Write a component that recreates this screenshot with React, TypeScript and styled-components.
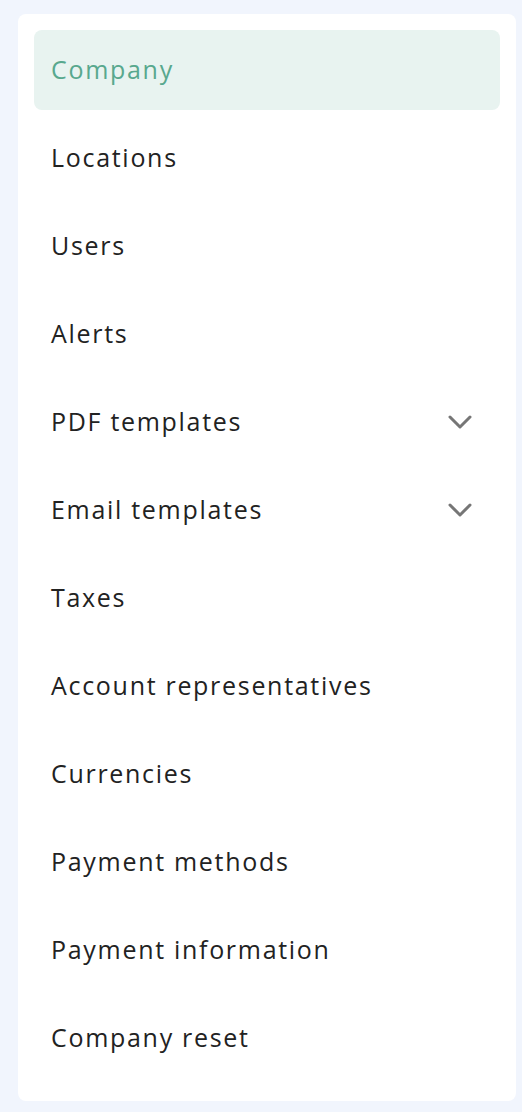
import React from "react";
import styled, { createGlobalStyle } from "styled-components";

const GlobalStyle = createGlobalStyle`
  html, body {
    margin: 0;
    padding: 0;
    background: #f1f5fd;
  }
  body {
    font-family: "Open Sans", "Liberation Sans", sans-serif;
  }
`;

const Page = styled.div`
  padding: 14px 6px 11px 18px;
  min-height: 1112px;
  box-sizing: border-box;
`;

const Card = styled.nav`
  background: #ffffff;
  border-radius: 8px;
  padding: 16px 16px 23px 16px;
  display: flex;
  flex-direction: column;
  gap: 8px;
`;

const NavItem = styled.div<{ $active?: boolean }>`
  height: 80px;
  display: flex;
  align-items: center;
  justify-content: space-between;
  padding: 0 28px 2px 17px;
  box-sizing: border-box;
  border-radius: 8px;
  background: ${(p) => (p.$active ? "#e8f3f0" : "transparent")};
  color: ${(p) => (p.$active ? "#58a88e" : "#222222")};
  font-size: 25px;
  font-weight: 500;
  letter-spacing: 1.7px;
`;

const Chevron = () => (
  <svg width="24" height="24" viewBox="0 0 24 24" fill="none" style={{ marginTop: 2 }}>
    <path d="M2 7l10 10 10-10" stroke="#767676" strokeWidth="3" strokeLinecap="round" strokeLinejoin="round" />
  </svg>
);

const items: { label: string; expandable?: boolean }[] = [
  { label: "Company" },
  { label: "Locations" },
  { label: "Users" },
  { label: "Alerts" },
  { label: "PDF templates", expandable: true },
  { label: "Email templates", expandable: true },
  { label: "Taxes" },
  { label: "Account representatives" },
  { label: "Currencies" },
  { label: "Payment methods" },
  { label: "Payment information" },
  { label: "Company reset" },
];

export default function App() {
  return (
    <>
      <GlobalStyle />
      <Page>
        <Card>
          {items.map((it, i) => (
            <NavItem key={it.label} $active={i === 0}>
              <span>{it.label}</span>
              {it.expandable && <Chevron />}
            </NavItem>
          ))}
        </Card>
      </Page>
    </>
  );
}
